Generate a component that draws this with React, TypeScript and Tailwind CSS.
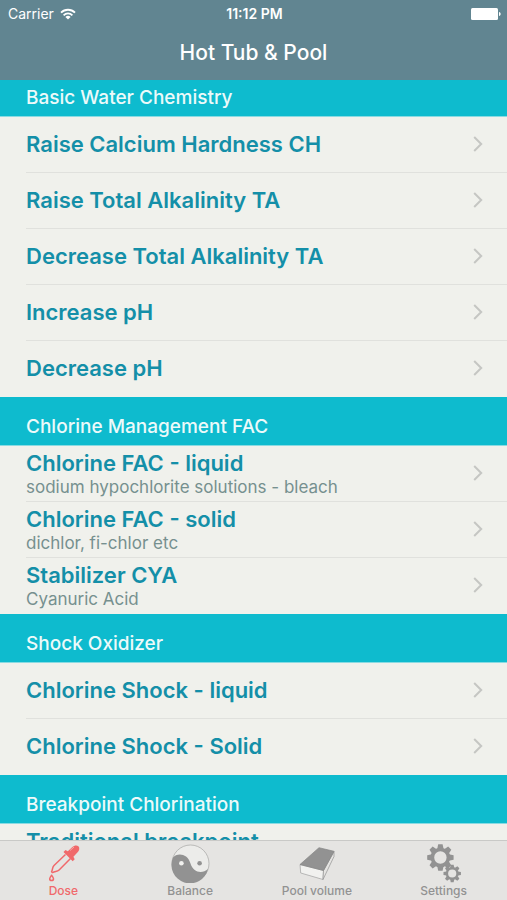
import type { ReactNode } from "react"

interface Item {
  title: string
  detail?: string
}

interface Section {
  title: string
  items: Item[]
}

interface Tab {
  label: string
  icon: ReactNode
}

const sections: Section[] = [
  {
    title: "Basic Water Chemistry",
    items: [
      { title: "Raise Calcium Hardness CH" },
      { title: "Raise Total Alkalinity TA" },
      { title: "Decrease Total Alkalinity TA" },
      { title: "Increase pH" },
      { title: "Decrease pH" },
    ],
  },
  {
    title: "Chlorine Management FAC",
    items: [
      { title: "Chlorine FAC - liquid", detail: "sodium hypochlorite solutions - bleach" },
      { title: "Chlorine FAC - solid", detail: "dichlor, fi-chlor etc" },
      { title: "Stabilizer CYA", detail: "Cyanuric Acid" },
    ],
  },
  {
    title: "Shock Oxidizer",
    items: [{ title: "Chlorine Shock - liquid" }, { title: "Chlorine Shock - Solid" }],
  },
  {
    title: "Breakpoint Chlorination",
    items: [{ title: "Traditional breakpoint", detail: "" }],
  },
]

function WifiIcon() {
  return (
    <svg viewBox="0 0 16 12" className="h-3 w-4" fill="none" stroke="white" strokeWidth="1.8">
      <path d="M1 4.6a10 10 0 0 1 14 0" />
      <path d="M3.6 7.3a6.2 6.2 0 0 1 8.8 0" />
      <path d="M8 11.6 5.4 9a3.7 3.7 0 0 1 5.2 0z" fill="white" stroke="none" />
    </svg>
  )
}

function BatteryIcon() {
  return (
    <svg viewBox="0 0 30 12" className="h-3 w-[30px]" fill="white">
      <rect width="27" height="12" rx="1.5" />
      <path d="M28 4c2.2.6 2.2 3.4 0 4z" />
    </svg>
  )
}

function ChevronIcon() {
  return (
    <svg viewBox="0 0 10 16" className="h-4 w-2.5 shrink-0" fill="none" stroke="#c5c6c3" strokeWidth="2">
      <path d="m1.2 1 7 7-7 7" />
    </svg>
  )
}

function DropperIcon() {
  return (
    <svg viewBox="0 0 40 40" className="size-10" fill="none" stroke="#f0696b" strokeWidth="1.5" strokeLinejoin="round">
      <path d="M22.5 11.500 11 22.500c-2 2-.9 3.600-2.400 6.200l.9.900c2.600-1.600 4.600-.6 6.600-2.600L27.500 15.500" />
      <path
        d="m20.500 9 2-2 2.300 1.200 4.300-4c2.200-2 4.800-2.400 6.300-.9 1.500 1.600 1.100 4.200-1 6.300l-4 4.200 1.300 2.400-2 2z"
        fill="#f0696b"
        stroke="none"
      />
      <path d="m27 7.500 4-3.500" stroke="#f8a9a9" strokeWidth="1" />
      <path d="M8.600 32.200c-1.200 1.700-1.900 2.600-1.900 3.500a1.900 1.900 0 0 0 3.800 0c0-.9-.7-1.800-1.900-3.500z" />
    </svg>
  )
}

function BalanceIcon() {
  return (
    <svg viewBox="0 0 40 40" className="size-10">
      <circle cx="20.500" cy="20.500" r="18.500" fill="#ececea" stroke="#a5a5a4" strokeWidth=".7" />
      <path d="M3 14.500C7 9.500 17.500 10 20.400 20.300 23 29.500 32 31.500 38 26A18.500 18.500 0 1 1 3 14.500z" fill="#929292" />
      <circle cx="11.400" cy="20.300" r="2.300" fill="#f1f1ef" />
      <circle cx="29.600" cy="20.300" r="2.300" fill="#929292" />
    </svg>
  )
}

function VolumeIcon() {
  return (
    <svg viewBox="0 0 40 40" className="size-10" strokeLinejoin="round" strokeWidth=".7">
      <path d="m3 21.500 23.500 6-.5 9L3.700 30z" fill="#f1f1ef" stroke="#a0a0a0" />
      <path d="M26.500 27.500 37 8.500v5l-11 23z" fill="#e5e4e2" stroke="#929292" />
      <path d="M3 21.500 22 4.700 37 8.300 26.500 27.500z" fill="#929292" stroke="#858585" />
    </svg>
  )
}

function Gear({ x, y, scale }: { x: number; y: number; scale: number }) {
  return (
    <g transform={`translate(${x} ${y}) scale(${scale})`}>
      <circle r="8" fill="none" stroke="#929292" strokeWidth="3.600" />
      {[0, 45, 90, 135, 180, 225, 270, 315].map((angle) => (
        <path key={angle} d="M-3.200-8.500-2.200-13.200h4.400l1 4.700z" fill="#929292" transform={`rotate(${angle})`} />
      ))}
    </g>
  )
}

function SettingsIcon() {
  return (
    <svg viewBox="0 0 40 40" className="size-10">
      <Gear x={16.4} y={14.5} scale={1} />
      <Gear x={28.2} y={30.5} scale={0.66} />
    </svg>
  )
}

const tabs: Tab[] = [
  { label: "Dose", icon: <DropperIcon /> },
  { label: "Balance", icon: <BalanceIcon /> },
  { label: "Pool volume", icon: <VolumeIcon /> },
  { label: "Settings", icon: <SettingsIcon /> },
]

function ListRow({ item }: { item: Item }) {
  return (
    <li className="group pl-[26px]">
      <button
        type="button"
        className="flex h-14 w-full items-center justify-between border-b border-[#e0e1dd] pr-6 pb-0.5 text-left group-last:border-transparent"
      >
        <span className="flex flex-col">
          <span className="text-[22px] leading-7 font-semibold text-[#148fa8]">{item.title}</span>
          {item.detail !== undefined && (
            <span className="h-5 text-[17px] leading-5 text-[#76908f]">{item.detail}</span>
          )}
        </span>
        <ChevronIcon />
      </button>
    </li>
  )
}

export default function App() {
  return (
    <div className="flex h-screen flex-col bg-[#f0f1ec] font-[Inter,'Liberation_Sans',sans-serif]">
      {/* Status bar and title */}
      <header className="shrink-0 bg-[#618591] text-white">
        <div className="grid h-[27px] grid-cols-3 items-center pr-1.5 pl-2 text-sm">
          <span className="flex items-center gap-1.5">
            Carrier
            <WifiIcon />
          </span>
          <span className="text-center font-semibold">11:12 PM</span>
          <span className="flex justify-end">
            <BatteryIcon />
          </span>
        </div>
        <h1 className="h-[53px] text-center text-[21px] leading-[51px] font-medium">Hot Tub &amp; Pool</h1>
      </header>

      {/* Treatments */}
      <main className="min-h-0 flex-1 overflow-y-auto [scrollbar-width:none]">
        {sections.map((section) => (
          <section key={section.title} className="group/section">
            <h2 className="flex h-[49px] items-end border-b border-[#8adbe2] bg-[#0ebbce] px-[26px] pb-1 text-[19px] leading-7 font-medium text-[#ecfafa] group-first/section:h-[37px]">
              {section.title}
            </h2>
            <ul>
              {section.items.map((item) => (
                <ListRow key={item.title} item={item} />
              ))}
            </ul>
          </section>
        ))}
      </main>

      {/* Tab bar */}
      <nav className="grid h-[60px] shrink-0 grid-cols-4 border-t border-[#c9c9c7] bg-[#e5e4e2]">
        {tabs.map((tab, i) => (
          <button
            key={tab.label}
            type="button"
            aria-current={i === 0 ? "page" : undefined}
            className="flex flex-col items-center pt-0.5 text-xs leading-4 font-medium text-[#929292] aria-[current=page]:text-[#f0696b]"
          >
            {tab.icon}
            {tab.label}
          </button>
        ))}
      </nav>
    </div>
  )
}
